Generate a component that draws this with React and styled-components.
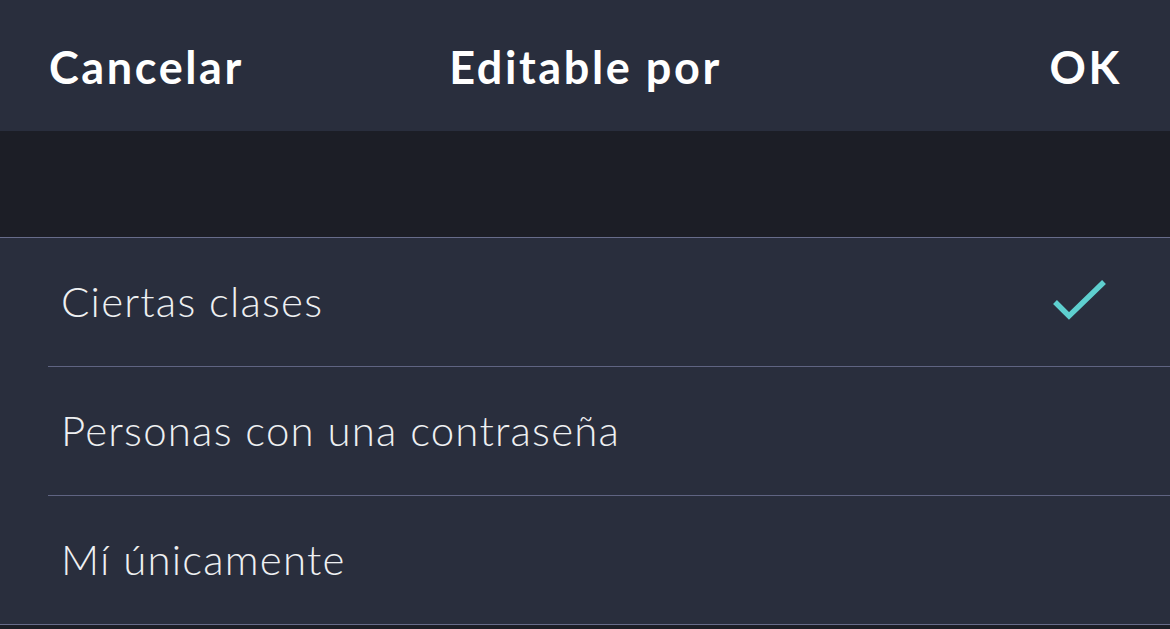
import React, { useState } from "react";
import styled, { createGlobalStyle } from "styled-components";

const GlobalStyle = createGlobalStyle`
  html, body {
    margin: 0;
    padding: 0;
    background: #1c1e26;
  }
  body {
    font-family: Lato, "Open Sans", sans-serif;
    -webkit-font-smoothing: antialiased;
  }
`;

const Screen = styled.div`
  width: 1170px;
  height: 629px;
  overflow: hidden;
  background: #1c1e26;
  display: flex;
  flex-direction: column;
`;

const NavBar = styled.div`
  height: 131px;
  flex-shrink: 0;
  background: #292e3d;
  display: grid;
  grid-template-columns: 1fr auto 1fr;
  align-items: center;
  padding: 0 48px 0 49px;
  box-sizing: border-box;
  color: #ffffff;
  font-weight: 700;
  font-size: 45px;
  letter-spacing: 2.6px;
`;

const NavButton = styled.button`
  background: none;
  border: none;
  padding: 0;
  color: inherit;
  font: inherit;
  letter-spacing: inherit;
  cursor: pointer;
  justify-self: ${(p) => (p.$right ? "end" : "start")};
  margin-top: 2px;
`;

const Title = styled.h1`
  margin: 2px 0 0;
  font: inherit;
`;

const Spacer = styled.div`
  height: 106px;
  flex-shrink: 0;
`;

const List = styled.ul`
  list-style: none;
  margin: 0;
  padding: 0;
  background: #292e3d;
  border-top: 1px solid #676c8a;
  border-bottom: 1px solid #676c8a;
`;

const Option = styled.li`
  height: 128px;
  margin-left: 48px;
  padding: 0 62px 0 13px;
  display: flex;
  align-items: center;
  justify-content: space-between;
  border-bottom: 1px solid #5f6482;
  color: #eef0f2;
  font-size: 42px;
  font-weight: 300;
  letter-spacing: 1.2px;
  cursor: pointer;

  span {
    margin-top: -2px;
  }

  &:last-child {
    border-bottom: none;
  }
`;

const Check = () => (
  <svg width="56" height="46" viewBox="0 0 56 46">
    <path
      d="M3 23 L17 37 L52 3"
      fill="none"
      stroke="#5ecfcf"
      strokeWidth="5.5"
    />
  </svg>
);

const options = ["Ciertas clases", "Personas con una contraseña", "Mí únicamente"];

export default function App() {
  const [selected, setSelected] = useState(0);
  return (
    <>
      <GlobalStyle />
      <Screen>
        <NavBar>
          <NavButton>Cancelar</NavButton>
          <Title>Editable por</Title>
          <NavButton $right>OK</NavButton>
        </NavBar>
        <Spacer />
        <List>
          {options.map((label, i) => (
            <Option key={label} onClick={() => setSelected(i)}>
              <span>{label}</span>
              {selected === i && <Check />}
            </Option>
          ))}
        </List>
      </Screen>
    </>
  );
}
